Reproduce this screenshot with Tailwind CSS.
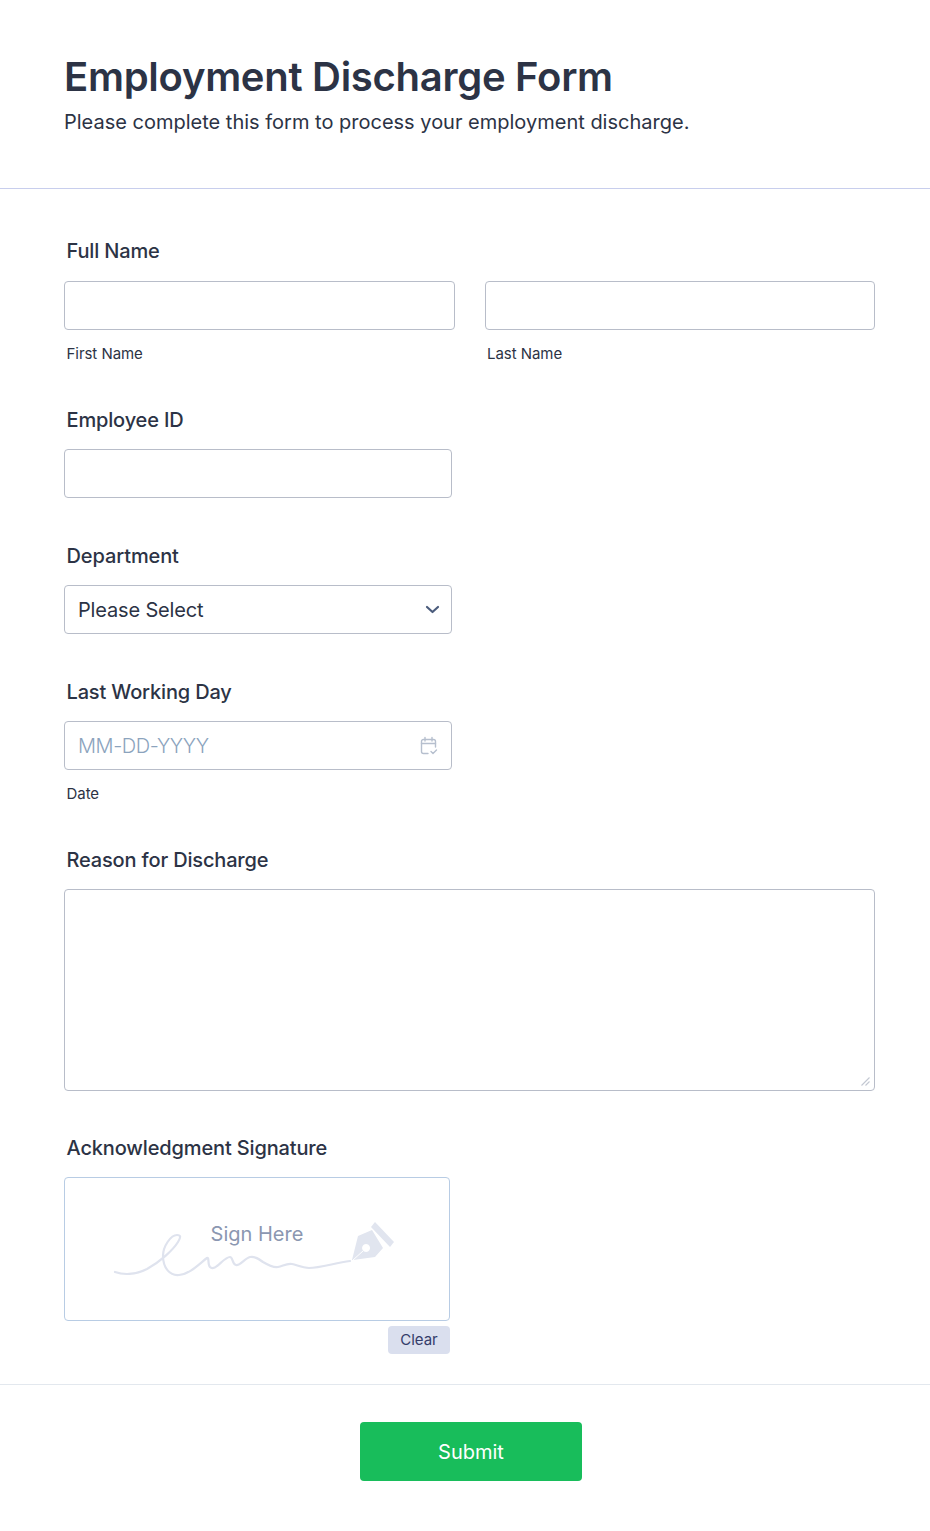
<!DOCTYPE html>
<html lang="en">
<head>
  <meta charset="UTF-8" />
  <title>Employment Discharge Form</title>
  <script src="https://cdn.jsdelivr.net/npm/@tailwindcss/browser@4"></script>
</head>
<body class="bg-white font-['Inter',sans-serif] text-[#2c3345] h-[1531px] overflow-hidden">

  <header class="h-[189px] border-b border-[#c8ceed] px-[64px] pt-[52px]">
    <h1 class="text-[40px] leading-[50px] font-semibold tracking-[-0.28px]">Employment Discharge Form</h1>
    <p class="text-[20px] leading-[30px] text-[#2c3345] mt-[5px]">Please complete this form to process your employment discharge.</p>
  </header>

  <form class="px-[64px] pt-[50px]">
    <!-- full name -->
    <div class="h-[169px]">
      <label class="block pl-[2.5px] text-[20px] leading-[24px] font-medium tracking-[-0.16px]">Full Name</label>
      <div class="flex gap-[30px] mt-[18px] w-[811px]">
        <div class="flex-1">
          <input type="text" class="block w-full h-[49px] border border-[#b8bdc9] rounded-[4px] bg-white" />
          <span class="block pl-[2.5px] mt-[15px] text-[15px] leading-[18px] tracking-[-0.05px]">First Name</span>
        </div>
        <div class="flex-1">
          <input type="text" class="block w-full h-[49px] border border-[#b8bdc9] rounded-[4px] bg-white" />
          <span class="block pl-[2.5px] mt-[15px] text-[15px] leading-[18px] tracking-[-0.05px]">Last Name</span>
        </div>
      </div>
    </div>

    <!-- employee id -->
    <div class="h-[136px]">
      <label class="block pl-[2.5px] text-[20px] leading-[24px] font-medium tracking-[-0.16px]">Employee ID</label>
      <input type="text" class="block w-[388px] h-[49px] mt-[17px] border border-[#b8bdc9] rounded-[4px] bg-white" />
    </div>

    <!-- department -->
    <div class="h-[136px]">
      <label class="block pl-[2.5px] text-[20px] leading-[24px] font-medium tracking-[-0.1px]">Department</label>
      <div class="relative w-[388px] h-[49px] mt-[17px] border border-[#b8bdc9] rounded-[4px] bg-white flex items-center pl-[13px] text-[20px] tracking-[-0.16px]">
        Please Select
        <svg class="absolute right-[11px] top-[18px]" width="15" height="11" viewBox="0 0 15 11" fill="none">
          <path d="M2 3l5.500 5L13 3" stroke="#4b5c7c" stroke-width="2.200" stroke-linecap="round" stroke-linejoin="round" />
        </svg>
      </div>
    </div>

    <!-- last working day -->
    <div class="h-[168px]">
      <label class="block pl-[2.5px] text-[20px] leading-[24px] font-medium tracking-[-0.16px]">Last Working Day</label>
      <div class="relative w-[388px] h-[49px] mt-[17px] border border-[#b8bdc9] rounded-[4px] bg-white flex items-center pl-[13px] text-[20px] font-light tracking-[-0.4px] text-[#8ba3bd]">
        MM-DD-YYYY
        <svg class="absolute right-[12px] top-[14px]" width="20" height="20" viewBox="0 0 20 20" fill="none" stroke="#b6bfce" stroke-width="1.400" stroke-linecap="round" stroke-linejoin="round">
          <path d="M9 17.500H4.500a2 2 0 0 1-2-2v-10a2 2 0 0 1 2-2h10a2 2 0 0 1 2 2V11" />
          <path d="M2.500 7.500h14M6 1.500v3.500M13 1.500v3.500" />
          <path d="M12 15.500l2 2 3.500-3.500" />
        </svg>
      </div>
      <span class="block pl-[2.5px] mt-[15px] text-[15px] leading-[18px] tracking-[-0.05px]">Date</span>
    </div>

    <!-- reason -->
    <div class="h-[288px]">
      <label class="block pl-[2.5px] text-[20px] leading-[24px] font-medium tracking-[-0.16px]">Reason for Discharge</label>
      <div class="relative w-[811px] mt-[17px]">
        <textarea class="block w-full h-[202px] border border-[#b8bdc9] rounded-[4px] bg-white resize-none"></textarea>
        <svg class="absolute right-[5px] bottom-[5px]" width="9" height="9" viewBox="0 0 9 9" fill="none" stroke="#c3c8d2" stroke-width="1.100">
          <path d="M0.500 8.500l8-8M4.500 8.500l4-4" />
        </svg>
      </div>
    </div>

    <!-- signature -->
    <div>
      <label class="block pl-[2.5px] text-[20px] leading-[24px] font-medium tracking-[-0.14px]">Acknowledgment Signature</label>
      <div class="relative w-[386px] h-[144px] mt-[17px] border border-[#b8cce4] rounded-[4px] bg-white">
        <span class="absolute left-0 right-0 top-[42px] text-center text-[20px] leading-[28px] text-[#8b97b1]">Sign Here</span>
        <svg class="absolute left-0 top-0" width="384" height="142" viewBox="0 0 384 142" fill="none">
          <path d="M50 94C58 97 70 97 82 91C95 84 108 72 113 64C116 59 116 57 112 57C106 57 98 68 98 78C98 90 105 98 114 97C125 96 134 86 142 80C144 79 143 84 144 87C145 91 149 91 152 88C156 85 161 79 165 79C168 79 167 86 171 87C175 88 180 80 185 79C190 78 194 81 198 84C203 87 208 90 213 89C218 88 222 85 227 86C232 87 237 90 244 90C255 90 270 85 285 83" stroke="#dfe3ee" stroke-width="2.200" stroke-linecap="round" stroke-linejoin="round" />
          <path fill="#e1e5ef" fill-rule="evenodd" d="M287 82l6-24 14-6 11 18-8 9-22 3zM301 66a4 4 0 1 0 0.100 0z" />
          <path d="M288 82l10-9" stroke="#ffffff" stroke-width="1" />
          <path fill="#e1e5ef" d="M310 44l19 20-4 5-19-20z" />
        </svg>
      </div>
      <div class="w-[386px] flex justify-end mt-[5px]">
        <button type="button" class="w-[62px] h-[28px] rounded-[4px] bg-[#dadfee] text-[15px] tracking-[-0.05px] text-[#343c6a]">Clear</button>
      </div>
    </div>
  </form>

  <div class="mt-[30px] border-t border-[#e3e8ee] pt-[37px] flex justify-center pl-[12px]">
    <button type="submit" class="w-[222px] h-[59px] rounded-[4px] bg-[#18bd5b] text-white text-[20px]">Submit</button>
  </div>

</body>
</html>
